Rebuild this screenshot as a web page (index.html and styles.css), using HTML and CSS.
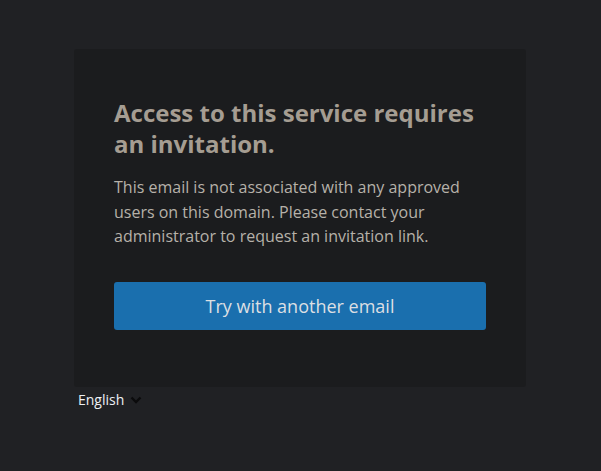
FILE: index.html
```html
<!DOCTYPE html>
<html lang="en">
<head>
<meta charset="utf-8">
<link rel="stylesheet" href="styles.css">
</head>
<body>
<main class="page">
  <section class="card">
    <h1 class="title">Access to this service requires an invitation.</h1>
    <p class="text">This email is not associated with any approved users on this domain. Please contact your administrator to request an invitation link.</p>
    <button class="btn" type="button">Try with another email</button>
  </section>
  <div class="lang">
    <span>English</span>
    <svg class="chev" width="12" height="8" viewBox="0 0 12 8"><path d="M1.5 1.5l4.5 4.5 4.5-4.5" fill="none" stroke="#0b0b0c" stroke-width="2.4"/></svg>
  </div>
</main>
</body>
</html>
```
FILE: styles.css
```css
html, body {
  margin: 0;
  padding: 0;
  background: #202124;
  font-family: "Open Sans", "Noto Sans", sans-serif;
}
.page {
  width: 452px;
  margin: 49px 0 0 74px;
}
.card {
  background: #1b1c1e;
  border-radius: 3px;
  padding: 48px 40px 57px;
}
.title {
  margin: 0;
  font-size: 24px;
  line-height: 31px;
  font-weight: 700;
  color: #a59d92;
}
.text {
  margin: 16px 0 0;
  font-size: 16px;
  line-height: 24.5px;
  color: #b6b1a9;
}
.btn {
  display: block;
  width: 100%;
  height: 48px;
  margin-top: 33px;
  border: 0;
  border-radius: 3px;
  background: #1a6fae;
  color: #dcdfe3;
  font-family: inherit;
  font-size: 18px;
}
.lang {
  display: flex;
  align-items: center;
  gap: 6px;
  padding: 2px 0 0 4px;
  font-size: 14px;
  line-height: 22px;
  color: #eceff3;
}
.chev {
  margin-top: 1px;
}
```
